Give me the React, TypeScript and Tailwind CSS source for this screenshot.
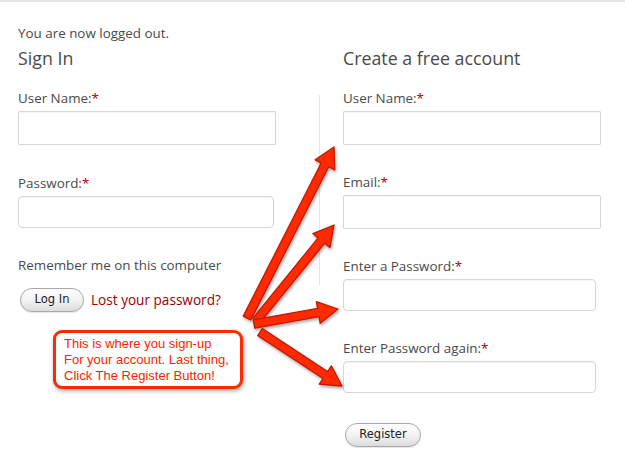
import React from "react";

type Pt = [number, number];

function arrowPoints(from: Pt, to: Pt, shaft = 4.2, head = 11, len = 20) {
  const dx = to[0] - from[0];
  const dy = to[1] - from[1];
  const d = Math.hypot(dx, dy);
  const ux = dx / d;
  const uy = dy / d;
  const px = -uy;
  const py = ux;
  const nx = to[0] - ux * len;
  const ny = to[1] - uy * len;
  const pts: Pt[] = [
    [from[0] + px * shaft, from[1] + py * shaft],
    [nx + px * shaft, ny + py * shaft],
    [nx + px * head, ny + py * head],
    [to[0], to[1]],
    [nx - px * head, ny - py * head],
    [nx - px * shaft, ny - py * shaft],
    [from[0] - px * shaft, from[1] - py * shaft],
  ];
  return pts.map((p) => p.join(",")).join(" ");
}

const arrows: [Pt, Pt][] = [
  [[247, 316], [334, 145]],
  [[256, 319], [334, 223]],
  [[254, 322], [338, 307]],
  [[260, 330], [342, 384]],
];

function Label({ text }: { text: string }) {
  return (
    <label className="block text-[13.4px] leading-[20px]">
      {text}
      <span className="text-[#a50000]">*</span>
    </label>
  );
}

function Field({ w, h, round }: { w: string; h: string; round?: boolean }) {
  return (
    <input
      className={`${w} ${h} mt-[3px] block border border-[#d6d6d6] bg-white shadow-[inset_0_1px_1px_rgba(0,0,0,0.04)] ${
        round ? "rounded-[4px]" : "rounded-[1px]"
      }`}
    />
  );
}

function PillButton({ children, w }: { children: React.ReactNode; w: string }) {
  return (
    <button
      className={`${w} h-[24px] rounded-full border border-[#a8a8a8] bg-gradient-to-b from-white via-[#f3f3f3] to-[#dcdcdc] text-[11.5px] text-[#222] font-['DejaVu_Sans',sans-serif] shadow-[0_1px_1px_rgba(0,0,0,0.1)]`}
    >
      {children}
    </button>
  );
}

export default function App() {
  return (
    <div className="relative w-[625px] h-[456px] overflow-hidden bg-white border-t-2 border-[#e6e6e6] text-[#4a4a4a] font-['Open_Sans',sans-serif]">
      <p className="pl-[18px] pt-[21px] text-[13.4px] leading-[20px]">You are now logged out.</p>

      <div className="flex pl-[18px]">
        <div className="w-[258px]">
          <h2 className="text-[17.8px] leading-[26px] mt-[2px]">Sign In</h2>
          <div className="mt-[17px]">
            <Label text="User Name:" />
            <Field w="w-[258px]" h="h-[34px]" />
          </div>
          <div className="mt-[28px]">
            <Label text="Password:" />
            <Field w="w-[256px]" h="h-[32px]" round />
          </div>
          <p className="mt-[27px] text-[13.4px] leading-[20px]">Remember me on this computer</p>
          <div className="mt-[13px] flex items-center gap-[7px] pl-[2px]">
            <PillButton w="w-[64px]">Log In</PillButton>
            <a className="text-[13.6px] text-[#9c0000]">Lost your password?</a>
          </div>
        </div>

        <div className="ml-[43px] mt-[52px] w-px h-[190px] bg-[#e4e4e4]" />

        <div className="ml-[23px] w-[258px]">
          <h2 className="text-[17.8px] leading-[26px] mt-[2px]">Create a free account</h2>
          <div className="mt-[17px]">
            <Label text="User Name:" />
            <Field w="w-[258px]" h="h-[34px]" />
          </div>
          <div className="mt-[27px]">
            <Label text="Email:" />
            <Field w="w-[258px]" h="h-[34px]" />
          </div>
          <div className="mt-[27px]">
            <Label text="Enter a Password:" />
            <Field w="w-[253px]" h="h-[32px]" round />
          </div>
          <div className="mt-[27px]">
            <Label text="Enter Password again:" />
            <Field w="w-[253px]" h="h-[32px]" round />
          </div>
          <div className="mt-[27px] pl-[2px]">
            <PillButton w="w-[76px]">Register</PillButton>
          </div>
        </div>
      </div>

      {/* annotation overlay */}
      <div className="absolute left-[53px] top-[328px] w-[190px] h-[59px] rounded-[9px] border-[3px] border-[#ff2a00] bg-white pl-[8px] pt-[3px] shadow-[1px_2px_4px_rgba(0,0,0,0.35)] font-['Liberation_Sans',Arial,sans-serif] text-[13px] leading-[16px] text-[#ff2200]">
        This is where you sign-up
        <br />
        For your account. Last thing,
        <br />
        Click The Register Button!
      </div>

      <svg
        className="absolute left-0 top-0 pointer-events-none drop-shadow-[1px_2px_1.5px_rgba(0,0,0,0.35)]"
        width="625"
        height="456"
      >
        {arrows.map(([a, b], i) => (
          <polygon
            key={i}
            points={arrowPoints(a, b)}
            fill="#ff2a00"
            stroke="#c41800"
            strokeWidth="1.3"
            strokeLinejoin="round"
          />
        ))}
      </svg>
    </div>
  );
}
